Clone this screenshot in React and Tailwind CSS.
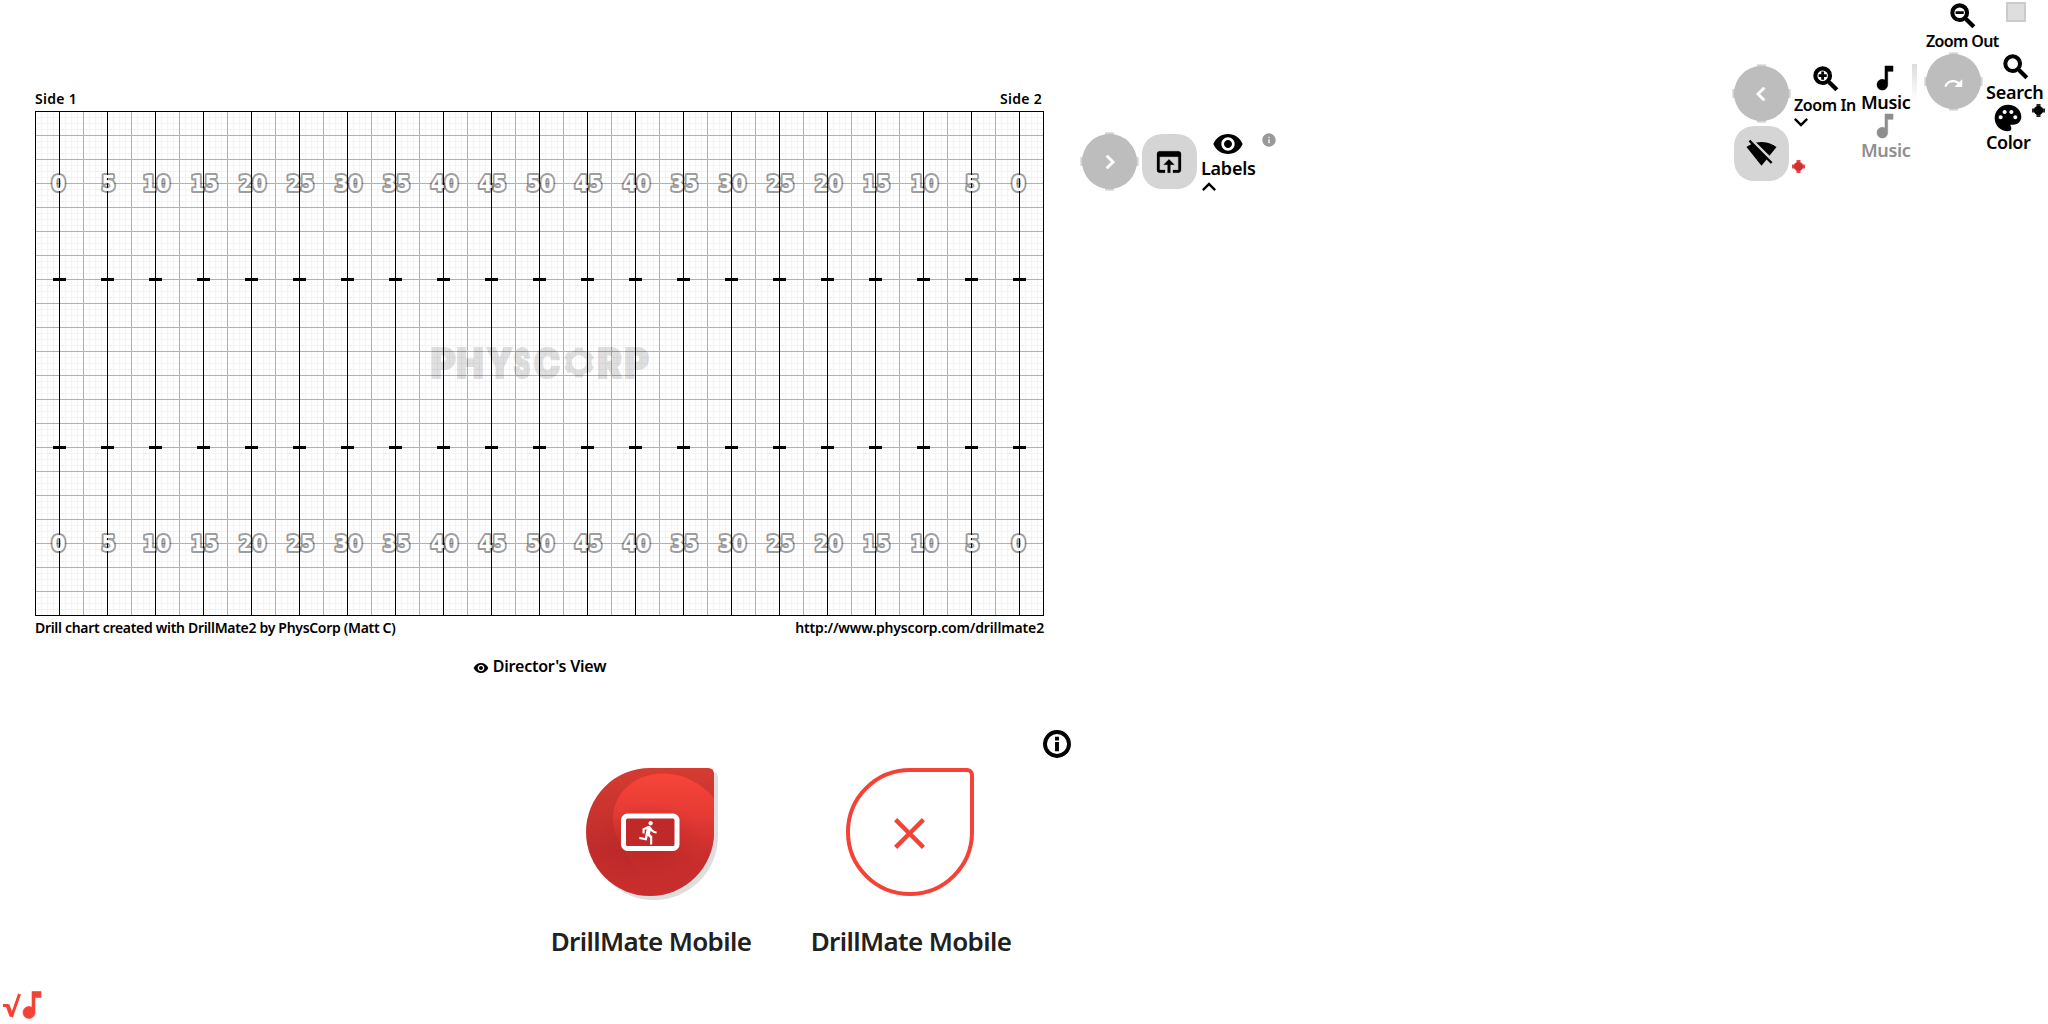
import React from "react";
import {
  MdChevronLeft,
  MdChevronRight,
  MdClose,
  MdDirectionsRun,
  MdExpandLess,
  MdExpandMore,
  MdInfo,
  MdInfoOutline,
  MdMusicNote,
  MdOpenInBrowser,
  MdPalette,
  MdRedo,
  MdSearch,
  MdSignalWifiOff,
  MdVisibility,
  MdZoomIn,
  MdZoomOut,
} from "react-icons/md";

const range = (n) => Array.from({ length: n }, (_, i) => i);
const yards = range(21).map((i) => (i <= 10 ? i * 5 : (20 - i) * 5));

// letter, centre, horizontal scale
const logo = [
  ["P", 408, 0.92],
  ["H", 435, 0.89],
  ["Y", 464.5, 0.82],
  ["S", 487, 0.6],
  ["C", 512, 0.86],
  ["R", 574.5, 0.9],
  ["P", 601.5, 0.92],
];

function Field() {
  return (
    <svg width="1009" height="505" viewBox="0 0 1009 505" className="block shrink-0">
      <g shapeRendering="crispEdges">
        {range(168).map((i) => (
          <rect key={i} x={i * 6} y="0" width="1" height="505" fill="#f3f3f3" />
        ))}
        {range(84).map((i) => (
          <rect key={i} x="0" y={i * 6} width="1009" height="1" fill="#f3f3f3" />
        ))}
        {range(42).map((i) => (
          <rect key={i} x={i * 24} y="0" width="1" height="505" fill="#b1b1b1" />
        ))}
        {range(21).map((i) => (
          <rect key={i} x="0" y={i * 24} width="1009" height="1" fill="#b1b1b1" />
        ))}
      </g>
      <g
        opacity="0.12"
        fontFamily="Inter, sans-serif"
        fontWeight="900"
        fontSize="41"
        stroke="#000"
        strokeWidth="2"
        textAnchor="middle"
      >
        {logo.map(([c, x, s], i) => (
          <text key={i} transform={`translate(${x} 266.500) scale(${s} 1)`}>
            {c}
          </text>
        ))}
        <g transform="translate(544 251.5)" stroke="none">
          <circle r="10" fill="none" stroke="#000" strokeWidth="5.5" />
          {range(6).map((i) => (
            <path key={i} d="M-4.500 -11L-3.500 -15H3.500L4.500 -11Z" transform={`rotate(${i * 60})`} />
          ))}
        </g>
      </g>
      <g shapeRendering="crispEdges">
        {yards.map((_, i) => (
          <g key={i}>
            <rect x={24 + i * 48} y="0" width="1" height="505" />
            <rect x={18 + i * 48} y="167" width="13" height="3" />
            <rect x={18 + i * 48} y="335" width="13" height="3" />
          </g>
        ))}
        <rect x="0.5" y="0.5" width="1008" height="504" fill="none" stroke="#000" />
      </g>
      <g
        fontFamily="'DejaVu Sans', sans-serif"
        fontWeight="700"
        fontSize="20.5"
        fill="#fff"
        stroke="#000"
        strokeOpacity="0.38"
        strokeWidth="4"
        strokeLinejoin="round"
        paintOrder="stroke"
        textAnchor="middle"
      >
        {yards.map((n, i) => {
          const x = 24.5 + i * 48 + (n === 0 ? -1 : 1);
          const w = n < 10 ? 14 : 27.5;
          return (
            <g key={i}>
              <text x={x} y="79.5" textLength={w} lengthAdjust="spacingAndGlyphs">{n}</text>
              <text x={x} y="439.5" textLength={w} lengthAdjust="spacingAndGlyphs">{n}</text>
            </g>
          );
        })}
      </g>
    </svg>
  );
}

function RoundButton({ children }) {
  return (
    <div className="grid h-[59px] w-[59px] shrink-0 place-items-center text-white">
      <svg width="59" height="59" viewBox="0 0 59 59" className="col-start-1 row-start-1">
        <defs>
          <radialGradient id="nub" gradientUnits="userSpaceOnUse" cx="29.5" cy="29.5" r="30">
            <stop offset="0.88" stopColor="#bdbdbd" />
            <stop offset="1" stopColor="#bdbdbd" stopOpacity="0.25" />
          </radialGradient>
        </defs>
        <path d="M25 0H34V59H25ZM0 25H59V34H0Z" fill="url(#nub)" />
        <circle cx="29.5" cy="29.5" r="27.5" fill="#bdbdbd" />
      </svg>
      <div className="col-start-1 row-start-1">{children}</div>
    </div>
  );
}

function SquareButton({ children }) {
  return (
    <div className="flex h-[55px] w-[55px] shrink-0 items-center justify-center rounded-[20px] bg-[#d5d5d5]">
      {children}
    </div>
  );
}

function Cross({ className }) {
  return (
    <svg width="13" height="13" viewBox="0 0 13 13" className={className}>
      <path d="M4.5 0H8.5V13H4.5ZM0 4.5H13V8.5H0Z" opacity="0.85" />
      <circle cx="6.5" cy="6.5" r="4.6" />
    </svg>
  );
}

function AppDrop() {
  return (
    <svg width="132" height="132" viewBox="0 0 132 132" className="block">
      <defs>
        <linearGradient id="base" x1="0" y1="0" x2="0" y2="1">
          <stop offset="0" stopColor="#d43c32" />
          <stop offset="0.65" stopColor="#c02b2b" />
          <stop offset="1" stopColor="#c92e2d" />
        </linearGradient>
        <linearGradient id="glow" x1="0" y1="0" x2="0" y2="1">
          <stop offset="0" stopColor="#f84539" />
          <stop offset="0.35" stopColor="#e43a33" />
          <stop offset="0.7" stopColor="#cf2f2e" stopOpacity="0.6" />
          <stop offset="1" stopColor="#c92e2d" stopOpacity="0" />
        </linearGradient>
        <radialGradient id="shade">
          <stop offset="0" stopColor="#a01f1f" stopOpacity="0.55" />
          <stop offset="1" stopColor="#b52626" stopOpacity="0" />
        </radialGradient>
        <clipPath id="drop">
          <path d="M64 0H122Q128 0 128 6V64A64 64 0 1 1 64 0Z" />
        </clipPath>
      </defs>
      <path d="M64 0H122Q128 0 128 6V64A64 64 0 1 1 64 0Z" transform="translate(4 4)" fill="#dedede" />
      <g clipPath="url(#drop)">
        <rect width="128" height="128" fill="url(#base)" />
        <path
          d="M128 30C114 14 96 5.500 77 5.500C49 5.500 27 25 27 51C27 62 31 70 36 78L64 128H128Z"
          fill="url(#glow)"
        />
        <ellipse cx="62" cy="74" rx="56" ry="40" fill="url(#shade)" />
      </g>
      <rect x="37.500" y="48" width="53.500" height="32.500" rx="4" fill="#c0292a" stroke="#fff" strokeWidth="5" />
      <MdDirectionsRun x="50" y="51.500" size="26" color="#fff" />
    </svg>
  );
}

function CloseDrop() {
  return (
    <div className="flex h-[128px] w-[128px] items-center justify-center rounded-[64px] rounded-tr-[7px] border-4 border-[#f44336] text-[#f44336]">
      <MdClose size={53} className="mt-[3px] -ml-px" />
    </div>
  );
}

export default function App() {
  return (
    <div className="flex h-[1024px] w-[2048px] overflow-hidden bg-white font-['Noto_Sans',sans-serif] font-semibold whitespace-nowrap text-black [&_path[fill=none]]:hidden">
      <main className="flex w-[1080px] shrink-0 flex-col pt-[89px]">
        <div className="ml-[35px] flex h-[22px] w-[1009px] justify-between pr-[2px] text-[14px] leading-[20px] tracking-[0.3px]">
          <span>Side 1</span>
          <span>Side 2</span>
        </div>
        <div className="ml-[35px]">
          <Field />
        </div>
        <div className="mt-px ml-[35px] flex h-[22px] w-[1009px] justify-between text-[14px] leading-[22px]">
          <span className="tracking-[-0.31px]">Drill chart created with DrillMate2 by PhysCorp (Matt C)</span>
          <span className="tracking-[-0.15px]">http://www.physcorp.com/drillmate2</span>
        </div>
        <div className="mt-[16px] ml-[35px] flex h-[22px] w-[1009px] items-center justify-center gap-[4px] text-[16px] leading-[22px] tracking-[-0.22px]">
          <MdVisibility size={16} className="mt-[3px]" />
          <span>Director's View</span>
        </div>
        <div className="mt-[50px] mr-[7px] flex h-[34px] justify-end">
          <MdInfoOutline size={32} strokeWidth={0.9} className="mt-px overflow-visible" />
        </div>
        <div className="mt-[7px] flex pl-[521px] text-[26px] leading-[36px] tracking-[-0.63px] text-[#212121]">
          <div className="flex w-[260px] flex-col items-center">
            <div className="ml-[2px] h-[132px]">
              <AppDrop />
            </div>
            <span className="mt-[23px]">DrillMate Mobile</span>
          </div>
          <div className="flex w-[260px] flex-col items-center">
            <div className="mr-[2px] h-[132px]">
              <CloseDrop />
            </div>
            <span className="mt-[23px]">DrillMate Mobile</span>
          </div>
        </div>
        <div className="mt-[27px] flex h-[38px] items-center pl-[3px] text-[#f44336]">
          <svg width="19" height="28" viewBox="0 0 19 28" fill="none" stroke="currentColor">
            <path d="M0 14.500H5.500" strokeWidth="3" />
            <path d="M4.500 14L8.500 25" strokeWidth="4" />
            <path d="M8.500 26L16.500 3" strokeWidth="3" />
          </svg>
          <MdMusicNote size={36} strokeWidth={0.4} className="-ml-[8px]" />
        </div>
      </main>

      <section className="flex w-[652px] shrink-0 items-start pt-[132px]">
        <RoundButton>
          <MdChevronRight size={28} strokeWidth={0.6} />
        </RoundButton>
        <div className="mt-[2px] ml-[3px]">
          <SquareButton>
            <MdOpenInBrowser size={32} strokeWidth={0.2} className="-ml-px" />
          </SquareButton>
        </div>
        <div className="ml-[4px] w-[60px]">
          <MdVisibility size={32} className="-mt-[4px] ml-[11px] block" />
          <div className="-mt-[2px] text-[18px] leading-[20px] tracking-[-0.25px]">Labels</div>
          <MdExpandLess size={28} className="-mt-[5px] -ml-[6px] block" />
        </div>
        <MdInfo size={16} className="text-[#999]" />
      </section>

      <section className="flex w-[316px] shrink-0 items-start">
        <div className="w-[62px] shrink-0 pt-[64px]">
          <RoundButton>
            <MdChevronLeft size={28} strokeWidth={0.6} className="-ml-[2px]" />
          </RoundButton>
          <div className="mt-[3px] flex pl-[2px]">
            <SquareButton>
              <MdSignalWifiOff size={31} />
            </SquareButton>
            <Cross className="mt-[34px] ml-[3px] shrink-0 fill-[#d32f2f]" />
          </div>
        </div>
        <div className="w-[68px] shrink-0 pt-[63px]">
          <MdZoomIn size={32} strokeWidth={1.1} className="mb-px ml-[16px] block" />
          <div className="-mt-px text-[16px] leading-[20px] tracking-[-0.4px]">Zoom In</div>
          <MdExpandMore size={28} className="-mt-[7px] -ml-[7px] block" />
        </div>
        <div className="w-[50px] shrink-0 pt-[62px] text-[18px] leading-[20px] tracking-[-0.35px]">
          <div className="h-[48px]">
            <MdMusicNote size={32} strokeWidth={0.4} className="ml-[7px] block" />
            <div className="-mt-[2px] -ml-px">Music</div>
          </div>
          <div className="h-[50px] text-[#8e8e8e]">
            <MdMusicNote size={32} strokeWidth={0.4} className="ml-[7px] block" />
            <div className="-mt-[2px] -ml-px">Music</div>
          </div>
        </div>
        <div className="mt-[64px] h-[36px] w-[5px] shrink-0 bg-linear-to-b from-[#dcdcdc] to-white" />
        <div className="ml-[7px] w-[63px] shrink-0">
          <MdZoomOut size={32} strokeWidth={1.1} className="ml-[23px] block" />
          <div className="-mt-px ml-[2px] text-[16px] leading-[20px] tracking-[-0.65px]">Zoom Out</div>
          <div className="mt-px">
            <RoundButton>
              <MdRedo size={21} className="mt-[3px]" />
            </RoundButton>
          </div>
        </div>
        <div className="w-[61px] shrink-0 pt-[2px] text-[18px] leading-[20px]">
          <div className="ml-[19px] h-[20px] w-[20px] border-2 border-[#cacaca] bg-[#dedede]" />
          <MdSearch size={32} strokeWidth={1} className="mt-[29px] mb-px ml-[13px] block" />
          <div className="-mt-[2px] -ml-px tracking-[-0.25px]">Search</div>
          <div className="flex">
            <MdPalette size={32} className="mb-px ml-[5px] block shrink-0" />
            <Cross className="mt-[2px] ml-[8px] shrink-0 fill-black" />
          </div>
          <div className="-mt-[3px] -ml-px tracking-[-0.45px]">Color</div>
        </div>
      </section>
    </div>
  );
}
